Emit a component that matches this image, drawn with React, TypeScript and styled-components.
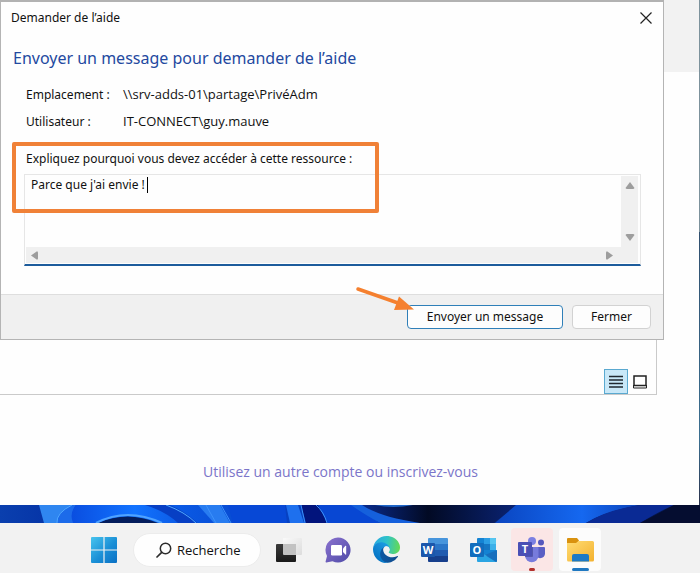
import React from "react";
import styled, { createGlobalStyle } from "styled-components";

const GlobalStyle = createGlobalStyle`
  *, *::before, *::after { box-sizing: border-box; }
  body { margin: 0; }
  body, button, textarea {
    font-family: "Noto Sans", "Open Sans", sans-serif;
    font-size: 12px;
    line-height: 18px;
    color: #111;
  }
`;

const Desktop = styled.div`
  display: flex;
  flex-direction: column;
  min-height: 100vh;
  background: linear-gradient(#7d929c 0, #7d929c 232px, #31506f 232px, #3b6f90 440px, #2b3550 500px);
`;

const BackWindow = styled.main`
  position: relative;
  display: flex;
  flex: 1;
  flex-direction: column;
  margin-right: 1px;
  background: #fefefe;
`;

const BackHeader = styled.div`
  height: 72px;
  background: #f2f2f2;
`;

const ErrorPanel = styled.section`
  display: flex;
  align-items: flex-end;
  justify-content: flex-end;
  height: 323px;
  margin-right: 42px;
  padding: 0 4px 0 0;
  border: solid #cacaca;
  border-width: 0 1px 1px 0;
`;

const ViewButton = styled.button<{ $active?: boolean }>`
  display: flex;
  align-items: center;
  justify-content: center;
  width: 24px;
  height: 25px;
  padding: 0;
  border: 1px solid ${(p) => (p.$active ? "#5aa9d0" : "transparent")};
  background: ${(p) => (p.$active ? "#c9e8f8" : "transparent")};
`;

const AccountArea = styled.div`
  display: flex;
  flex: 1;
  align-items: center;
  justify-content: center;
  padding: 44px 18px 0 0;
`;

const AccountLink = styled.a`
  margin-bottom: 1px;
  color: #7b75c9;
  font-family: "Open Sans", sans-serif;
  font-size: 14px;
  line-height: 20px;
  text-decoration: none;
`;

const Dialog = styled.div`
  position: absolute;
  top: 0;
  left: 0;
  right: 35px;
  border: 1px solid #b4b4b4;
  border-top: 2px solid #b2b2b2;
  background: #fefefe;
`;

const TitleBar = styled.header`
  display: flex;
  align-items: center;
  justify-content: space-between;
  height: 32px;
  padding: 0 11px 0 10px;
`;

const CloseButton = styled.button`
  display: flex;
  padding: 0;
  border: 0;
  background: none;
`;

const DialogBody = styled.div`
  padding: 12px 22px 28px 23px;
`;

const Heading = styled.h1`
  margin: 0 0 15px -11px;
  color: #2349a0;
  font-size: 16px;
  font-weight: 400;
  line-height: 24px;
`;

const Details = styled.dl`
  display: grid;
  grid-template-columns: 97px 1fr;
  align-items: baseline;
  row-gap: 8px;
  margin: 0 0 19px 2px;
`;

const Term = styled.dt``;

const Value = styled.dd`
  margin: 0;
  font-family: "Open Sans", sans-serif;
  font-size: 13px;
`;

const Field = styled.div`
  position: relative;
`;

const FieldLabel = styled.label`
  display: block;
  margin: 0 0 6px 2px;
`;

const EditFrame = styled.div`
  display: grid;
  grid-template-columns: 1fr 17px;
  grid-template-rows: 71px 16px;
  padding: 1px 2px 1px 1px;
  border: 1px solid #e6e6e6;
  border-bottom: 2px solid #1d5c9c;
`;

const Message = styled.textarea`
  width: 100%;
  padding: 0 5px;
  border: 0;
  outline: 0;
  background: transparent;
  resize: none;
  overflow: hidden;
  white-space: pre;
`;

const Caret = styled.span`
  position: absolute;
  top: 27px;
  left: 123px;
  width: 1px;
  height: 16px;
  background: #000;
`;

const ScrollTrack = styled.div<{ $horizontal?: boolean }>`
  display: flex;
  flex-direction: ${(p) => (p.$horizontal ? "row" : "column")};
  grid-column: ${(p) => (p.$horizontal ? "1 / -1" : "2")};
  align-items: center;
  justify-content: space-between;
  padding: ${(p) => (p.$horizontal ? "0 24px 0 4px" : "5px 0")};
  background: #f0f0f0;
`;

const ScrollButton = styled.button`
  display: flex;
  padding: 0;
  border: 0;
  background: none;
`;

const Highlight = styled.div`
  position: absolute;
  top: -8px;
  left: -12px;
  width: 367px;
  height: 71px;
  border: 4px solid #f08137;
  border-radius: 2px;
  pointer-events: none;
`;

const DialogFooter = styled.footer`
  position: relative;
  display: flex;
  justify-content: flex-end;
  gap: 9px;
  padding: 10px 12px;
  border-top: 1px solid #dedede;
  background: #f0f0f0;
`;

const PushButton = styled.button<{ $primary?: boolean }>`
  min-width: ${(p) => (p.$primary ? "156px" : "79px")};
  height: 24px;
  padding: 0 8px;
  border: 1px solid ${(p) => (p.$primary ? "#2f7fb8" : "#d2d2d2")};
  border-radius: 4px;
  background: #fdfdfd;
  line-height: 20px;
`;

const Arrow = styled.svg`
  position: absolute;
  top: -9px;
  right: 248px;
`;

const Wallpaper = styled.svg`
  display: block;
  width: 100%;
  height: 18px;
`;

const Taskbar = styled.nav`
  display: flex;
  justify-content: center;
  height: 50px;
  padding: 5px 16px 0 0;
  background: #f2f2f2;
`;

const SearchButton = styled.button`
  display: flex;
  align-items: center;
  gap: 5px;
  width: 128px;
  height: 34px;
  margin: 5px 7px 0 8px;
  padding: 0 0 0 22px;
  border: 1px solid #ececec;
  border-radius: 17px;
  background: #fefefe;
  font-family: "Open Sans", sans-serif;
  font-size: 13px;
`;

const Apps = styled.div`
  display: flex;
  justify-content: space-between;
  width: 333px;
`;

const AppButton = styled.button<{ $tone?: string; $mark?: string; $markWidth?: number }>`
  position: relative;
  display: flex;
  align-items: center;
  justify-content: center;
  width: 42px;
  height: 43px;
  padding: 0;
  border: 0;
  border-radius: 4px;
  background: ${(p) => p.$tone ?? "transparent"};

  &::after {
    content: "";
    position: absolute;
    bottom: 0;
    width: ${(p) => p.$markWidth ?? 0}px;
    height: 3px;
    border-radius: 2px;
    background: ${(p) => p.$mark ?? "transparent"};
  }
`;

type Direction = "up" | "down" | "left" | "right";

const triangles: Record<Direction, string> = {
  up: "M5 1 L9.5 7 Q9 8 8 8 H2 Q1 8 .5 7 Z",
  down: "M5 8 L9.5 2 Q9 1 8 1 H2 Q1 1 .5 2 Z",
  left: "M1 4.5 L7 .2 Q8 .5 8 1.5 V7.5 Q8 8.5 7 8.8 Z",
  right: "M9 4.5 L3 .2 Q2 .5 2 1.5 V7.5 Q2 8.5 3 8.8 Z",
};

const ScrollArrow = ({ direction, label }: { direction: Direction; label: string }) => (
  <ScrollButton type="button" aria-label={label}>
    <svg width="10" height="9" viewBox="0 0 10 9">
      <path d={triangles[direction]} fill="#9d9d9d" />
    </svg>
  </ScrollButton>
);

const StartIcon = () => (
  <svg width="26" height="26" viewBox="0 0 26 26">
    <defs>
      <linearGradient id="start" x1="0" y1="0" x2="26" y2="26" gradientUnits="userSpaceOnUse">
        <stop stopColor="#48c4ee" />
        <stop offset=".55" stopColor="#1a8fd6" />
        <stop offset="1" stopColor="#0b70c4" />
      </linearGradient>
    </defs>
    <path fill="url(#start)" d="M1 0H12.4V12.4H0V1Q0 0 1 0ZM13.6 0H25Q26 0 26 1V12.4H13.6ZM0 13.6H12.4V26H1Q0 26 0 25ZM13.6 13.6H26V25Q26 26 25 26H13.6Z" />
  </svg>
);

const TaskViewIcon = () => (
  <svg width="28" height="26" viewBox="0 0 28 26">
    <defs>
      <linearGradient id="dark" x1="0" y1="0" x2="0" y2="1">
        <stop stopColor="#3b3b3b" />
        <stop offset="1" stopColor="#1a1a1a" />
      </linearGradient>
      <linearGradient id="light" x1="0" y1="0" x2="1" y2="1">
        <stop stopColor="#fafafa" />
        <stop offset="1" stopColor="#dcdcdc" />
      </linearGradient>
    </defs>
    <rect x="8" y="1" width="19" height="17" rx="1" fill="url(#light)" />
    <rect x="1" y="7" width="20" height="18" rx="1" fill="url(#dark)" />
    <path d="M8 7H21V18H9Q8 18 8 17Z" fill="#c2c2c2" />
  </svg>
);

const ChatIcon = () => (
  <svg width="26" height="26" viewBox="0 0 26 26">
    <defs>
      <linearGradient id="chat" x1="0" y1="0" x2="1" y2="1">
        <stop stopColor="#8b72cf" />
        <stop offset="1" stopColor="#4f4ba8" />
      </linearGradient>
    </defs>
    <path fill="url(#chat)" d="M13 .5A12.5 12.5 0 1 1 7.5 24.2L1.4 25.4Q.3 25.5 .6 24.4L2 19A12.5 12.5 0 0 1 13 .5Z" />
    <rect x="6" y="8" width="11" height="10.5" rx="1.2" fill="#fff" />
    <path d="M18 11.5 20.4 8.8Q21.2 8.4 21.2 9.4V17Q21.2 18 20.4 17.5L18 15Z" fill="#fff" />
  </svg>
);

const EdgeIcon = () => (
  <svg width="27" height="27" viewBox="0 0 256 256">
    <defs>
      <linearGradient id="edgeLow" x1="63" y1="178" x2="242" y2="178" gradientUnits="userSpaceOnUse">
        <stop stopColor="#0c59a4" />
        <stop offset="1" stopColor="#114a8b" />
      </linearGradient>
      <linearGradient id="edgeMid" x1="157" y1="100" x2="46" y2="222" gradientUnits="userSpaceOnUse">
        <stop stopColor="#1b9de2" />
        <stop offset=".4" stopColor="#168bd6" />
        <stop offset="1" stopColor="#0676c6" />
      </linearGradient>
      <linearGradient id="edgeTop" x1="8" y1="70" x2="250" y2="100" gradientUnits="userSpaceOnUse">
        <stop stopColor="#28a9e2" />
        <stop offset=".5" stopColor="#2fc3c7" />
        <stop offset="1" stopColor="#63d957" />
      </linearGradient>
    </defs>
    <path fill="url(#edgeLow)" d="M231 190.500a93.700 93.700 0 0 1-10.500 4.700 101.900 101.900 0 0 1-35.900 6.400c-47.300 0-88.500-32.500-88.500-74.300a31.500 31.500 0 0 1 16.400-27.300c-42.800 1.800-53.800 46.400-53.800 72.500 0 73.900 68.100 81.400 82.800 81.400 7.900 0 19.800-2.300 27-4.600l1.300-.4a128.300 128.300 0 0 0 66.600-52.800 4 4 0 0 0-5.400-5.600Z" />
    <path fill="url(#edgeMid)" d="M105.700 241.400a79.200 79.200 0 0 1-22.700-21.300 80.700 80.700 0 0 1 29.500-120c3.200-1.500 8.500-4.200 15.600-4.100a32.400 32.400 0 0 1 25.700 13 31.900 31.900 0 0 1 6.300 18.700c0-.2 24.500-79.600-80-79.600-43.900 0-80 41.600-80 78.200a130.200 130.200 0 0 0 12.100 56 128 128 0 0 0 156.400 67.100 75.500 75.500 0 0 1-62.800-8Z" />
    <path fill="url(#edgeTop)" d="M152.300 148.900c-.8 1-3.300 2.500-3.300 5.700 0 2.600 1.700 5.100 4.700 7.200 14.400 10 41.500 8.700 41.600 8.700a59.600 59.600 0 0 0 30.300-8.300 61.400 61.400 0 0 0 30.400-52.900c.3-22.400-8-37.300-11.300-43.900C223.500 23.900 177.700 0 128 0A128 128 0 0 0 0 126.200c.5-36.500 36.800-66 80-66 3.500 0 23.500.3 42 10 16.300 8.600 24.900 18.900 30.800 29.200 6.200 10.700 7.300 24.100 7.300 29.500s-2.700 13.300-7.800 20Z" />
  </svg>
);

const tileLetter = {
  fill: "#fff",
  fontFamily: "Open Sans",
  fontWeight: 700,
  textAnchor: "middle" as const,
};

const WordIcon = () => (
  <svg width="27" height="24" viewBox="0 0 27 24">
    <path d="M8 0H26Q27 0 27 1V6H7V1Q7 0 8 0Z" fill="#4795dc" />
    <path d="M7 6H27V12H7Z" fill="#2b76c8" />
    <path d="M7 12H27V18H7Z" fill="#205bb0" />
    <path d="M7 18H27V23Q27 24 26 24H8Q7 24 7 23Z" fill="#173f8c" />
    <rect x="0" y="5" width="14" height="14" rx="1" fill="#1b57ab" />
    <text {...tileLetter} x="7" y="16" fontSize="11">W</text>
  </svg>
);

const OutlookIcon = () => (
  <svg width="27" height="24" viewBox="0 0 27 24">
    <rect x="7" y="0" width="19" height="17" rx="1" fill="#1483d3" />
    <path d="M14 0H20V6H14Z" fill="#2b9de4" />
    <path d="M20 0H25Q26 0 26 1V6H20Z" fill="#55c6f1" />
    <path d="M14 6H20V12H14Z" fill="#1576c3" />
    <path d="M20 6H26V12H20Z" fill="#3bb0e9" />
    <path d="M7 12 17 18 27 12V23Q27 24 26 24H8Q7 24 7 23Z" fill="#2aa5e3" />
    <path d="M27 12V23Q27 24 26 24L15 17Z" fill="#176fbd" />
    <rect x="0" y="5" width="14" height="14" rx="1" fill="#116dbd" />
    <text {...tileLetter} x="7" y="16" fontSize="11">O</text>
  </svg>
);

const TeamsIcon = () => (
  <svg width="27" height="26" viewBox="0 0 27 26">
    <circle cx="23" cy="5.500" r="3" fill="#5558bd" />
    <path d="M18 10H26Q27 10 27 11V17A5 5 0 0 1 18 19Z" fill="#5a5fc4" />
    <circle cx="14" cy="4" r="4" fill="#7b80e2" />
    <path d="M8 10H19.500Q20.500 10 20.500 11V18.500A6.500 6.500 0 0 1 7 18.500V11Q7 10 8 10Z" fill="#777bdc" />
    <path d="M7 10H15V19Q15 20 14 20H7.200L7 18.500Z" fill="#5356ad" />
    <rect x="0" y="5" width="14" height="14" rx="1" fill="#4a4fb5" />
    <text {...tileLetter} x="7" y="16" fontSize="11">T</text>
  </svg>
);

const ExplorerIcon = () => (
  <svg width="27" height="24" viewBox="0 0 27 24">
    <defs>
      <linearGradient id="folder" x1="0" y1="0" x2="1" y2="1">
        <stop stopColor="#ffdc73" />
        <stop offset="1" stopColor="#f3b12f" />
      </linearGradient>
    </defs>
    <path d="M1 0H10L12 2.500 10 5H0V1Q0 0 1 0Z" fill="#d9920f" />
    <path d="M0 5H9L11.500 3H25.500Q27 3 27 4.500V22Q27 23.500 25.500 23.500H1.500Q0 23.500 0 22Z" fill="url(#folder)" />
    <path d="M5 23.500V18Q5 16 7 16H20Q22 16 22 18V23.500Z" fill="#1c7ac6" />
  </svg>
);

const WallpaperArt = () => (
  <Wallpaper viewBox="0 0 700 18" preserveAspectRatio="none" aria-hidden="true">
    <defs>
      <linearGradient id="sky">
        <stop stopColor="#0a3fae" />
        <stop offset=".06" stopColor="#0636a8" />
        <stop offset=".25" stopColor="#0a5ae6" />
        <stop offset=".4" stopColor="#0742c4" />
        <stop offset="1" stopColor="#06113c" />
      </linearGradient>
      <linearGradient id="petal">
        <stop stopColor="#0a4ee0" />
        <stop offset=".5" stopColor="#1273ff" />
        <stop offset="1" stopColor="#0a52dc" />
      </linearGradient>
      <linearGradient id="night">
        <stop stopColor="#0a2e98" />
        <stop offset=".45" stopColor="#020a24" />
        <stop offset="1" stopColor="#0a2374" />
      </linearGradient>
      <linearGradient id="wave">
        <stop stopColor="#0a45c0" />
        <stop offset=".6" stopColor="#1568f0" />
        <stop offset="1" stopColor="#0c43b8" />
      </linearGradient>
    </defs>
    <rect width="700" height="18" fill="url(#sky)" />
    <path d="M39 0H72Q58 8 57 18H44Z" fill="#2f86f0" />
    <path d="M72 0Q56 8 57 18H75Q70 8 76 0Z" fill="#1c6bea" />
    <path d="M76 0H160Q185 6 198 18H73Q69 8 76 0Z" fill="url(#petal)" />
    <path d="M145 0H170Q188 8 197 18H178Q165 6 145 0Z" fill="#073fc4" />
    <path d="M98 18Q127 5 158 18Z" fill="#041d5c" />
    <path d="M96 18Q127 2 162 18" fill="none" stroke="#4fa3ff" strokeWidth="2" />
    <path d="M72 0Q56 8 57 18M166 0Q185 7 196 18" fill="none" stroke="#4fa8ff" />
    <path d="M198 0H220L230 18H214Z" fill="#287cf0" />
    <path d="M228 0H285L287 18H233Z" fill="#0748d6" />
    <path d="M286 0H298L304 18H290Z" fill="#1e70ee" />
    <path d="M301 0H318L327 18H306Z" fill="#02147c" />
    <path d="M318 0H355L380 18H328Z" fill="#0847d3" />
    <path d="M301 0 305 18M316 0Q324 7 327 18M221 0 231 18M206 0 216 18" fill="none" stroke="#3d91fa" />
    <path d="M355 0H517L494 18H380Z" fill="url(#night)" />
    <path d="M375 0Q393 4 413 0Z" fill="#1e66c9" />
    <path d="M351 0Q362 8 380 18H420Q380 12 362 0Z" fill="#1560dc" />
    <path d="M516 0H640Q606 6 586 18H495Z" fill="url(#wave)" />
    <path d="M640 0Q606 5 586 18H640Q660 6 674 0Z" fill="#0a2a94" />
    <path d="M674 0H700V18H640Q660 8 674 0Z" fill="#050d30" />
  </Wallpaper>
);

export default function App() {
  return (
    <>
      <GlobalStyle />
      <Desktop>
        <BackWindow>
          <BackHeader />
          <ErrorPanel aria-label="Affichage">
            <ViewButton $active type="button" aria-label="Détails">
              <svg width="14" height="14" viewBox="0 0 14 14">
                <path d="M0 1.500H14M0 5H14M0 8.500H14M0 12H14" stroke="#202830" strokeWidth="1.300" />
              </svg>
            </ViewButton>
            <ViewButton type="button" aria-label="Grandes icônes">
              <svg width="14" height="14" viewBox="0 0 14 14">
                <path d="M1 1H13V10.500H1Z" fill="#fff" stroke="#222" strokeWidth="1.500" />
                <path d="M.5 10V13H13.500V10" fill="none" stroke="#222" />
              </svg>
            </ViewButton>
          </ErrorPanel>
          <AccountArea>
            <AccountLink href="#compte">Utilisez un autre compte ou inscrivez-vous</AccountLink>
          </AccountArea>

          <Dialog role="dialog" aria-labelledby="dialog-title">
            <TitleBar>
              <span id="dialog-title">Demander de l’aide</span>
              <CloseButton type="button" aria-label="Fermer la fenêtre">
                <svg width="12" height="12" viewBox="0 0 12 12">
                  <path d="M.5.5 11.500 11.500M11.500.5.5 11.500" stroke="#222" strokeWidth="1.200" />
                </svg>
              </CloseButton>
            </TitleBar>
            <DialogBody>
              <Heading>Envoyer un message pour demander de l’aide</Heading>
              <Details>
                <Term>Emplacement :</Term>
                <Value>\\srv-adds-01\partage\PrivéAdm</Value>
                <Term>Utilisateur :</Term>
                <Value>IT-CONNECT\guy.mauve</Value>
              </Details>
              <Field>
                <FieldLabel htmlFor="reason">Expliquez pourquoi vous devez accéder à cette ressource :</FieldLabel>
                <EditFrame>
                  <Message id="reason" defaultValue="Parce que j'ai envie !" spellCheck={false} />
                  <ScrollTrack>
                    <ScrollArrow direction="up" label="Défiler vers le haut" />
                    <ScrollArrow direction="down" label="Défiler vers le bas" />
                  </ScrollTrack>
                  <ScrollTrack $horizontal>
                    <ScrollArrow direction="left" label="Défiler vers la gauche" />
                    <ScrollArrow direction="right" label="Défiler vers la droite" />
                  </ScrollTrack>
                </EditFrame>
                <Caret />
                <Highlight />
              </Field>
            </DialogBody>
            <DialogFooter>
              <PushButton $primary type="button">Envoyer un message</PushButton>
              <PushButton type="button">Fermer</PushButton>
              <Arrow width="60" height="28" viewBox="0 0 60 28" aria-hidden="true">
                <path d="M3 3 43 17" stroke="#f5802f" strokeWidth="3.500" strokeLinecap="round" />
                <path d="M44 10.500 59 23.500 39 24Z" fill="#f5802f" />
              </Arrow>
            </DialogFooter>
          </Dialog>
        </BackWindow>

        <WallpaperArt />

        <Taskbar aria-label="Barre des tâches">
          <AppButton type="button" aria-label="Démarrer"><StartIcon /></AppButton>
          <SearchButton type="button">
            <svg width="16" height="16" viewBox="0 0 16 16">
              <circle cx="9.500" cy="6.500" r="5.200" fill="none" stroke="#2c2c2c" strokeWidth="1.500" />
              <path d="M5.700 10.300 1 15" stroke="#2c2c2c" strokeWidth="1.700" strokeLinecap="round" />
            </svg>
            Recherche
          </SearchButton>
          <Apps>
            <AppButton type="button" aria-label="Vue des tâches"><TaskViewIcon /></AppButton>
            <AppButton type="button" aria-label="Conversation"><ChatIcon /></AppButton>
            <AppButton type="button" aria-label="Edge"><EdgeIcon /></AppButton>
            <AppButton type="button" aria-label="Word"><WordIcon /></AppButton>
            <AppButton type="button" aria-label="Outlook"><OutlookIcon /></AppButton>
            <AppButton type="button" aria-label="Teams" $tone="#fbe6e6" $mark="#b3302c" $markWidth={6}><TeamsIcon /></AppButton>
            <AppButton type="button" aria-label="Explorateur" $tone="#fcfcfc" $mark="#1f78c1" $markWidth={17}><ExplorerIcon /></AppButton>
          </Apps>
        </Taskbar>
      </Desktop>
    </>
  );
}
